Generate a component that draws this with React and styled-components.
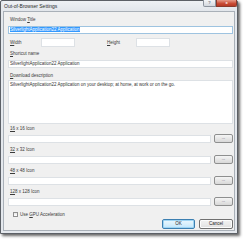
import React from 'react';
import styled, { createGlobalStyle } from 'styled-components';

const Global = createGlobalStyle`
  html, body {
    margin: 0;
    padding: 0;
    background: #ffffff;
  }
  body {
    width: 244px;
    height: 240px;
    overflow: hidden;
    font-family: 'Liberation Sans', Arial, sans-serif;
  }
`;

const Window = styled.div`
  width: 238px;
  height: 234px;
  box-sizing: border-box;
  border: 1px solid #5c6066;
  border-radius: 2px 2px 0 0;
  background: #e4e8ed;
  box-shadow: 2px 2px 3px rgba(0, 0, 0, 0.6);
  display: flex;
  flex-direction: column;
  padding: 0 2px 2px 2px;
`;

const TitleBar = styled.div`
  height: 10px;
  display: flex;
  align-items: flex-start;
  justify-content: space-between;
  background: linear-gradient(#eef1f4, #e2e6eb);
`;

const Title = styled.span`
  font-size: 5px;
  line-height: 6px;
  color: #2a2a2a;
  margin-top: 2px;
  padding-left: 1px;
`;

const Caption = styled.div`
  display: flex;
  margin-top: -1px;
  margin-right: -2px;
`;

const CaptionButton = styled.div`
  width: ${p => p.$w}px;
  height: 7px;
  box-sizing: border-box;
  border: 1px solid ${p => (p.$close ? '#8a3a2c' : '#8c949e')};
  border-top: none;
  background: ${p =>
    p.$close
      ? 'linear-gradient(#e69a88, #c84a34 60%, #b63a26)'
      : 'linear-gradient(#f4f6f8, #d3d8de)'};
  border-radius: ${p => (p.$close ? '0 0 2px 0' : '0 0 0 2px')};
  color: ${p => (p.$close ? '#ffffff' : '#6b7480')};
  font-size: 4px;
  line-height: 6px;
  text-align: center;
  font-weight: bold;
`;

const Client = styled.div`
  flex: 1;
  box-sizing: border-box;
  border: 1px solid #a9b0b8;
  background: #f0f0f0;
  padding: 4px 1px 0 4px;
  display: flex;
  flex-direction: column;
`;

const Label = styled.div`
  height: 7px;
  font-size: 4.5px;
  line-height: 7px;
  color: #3a3a3a;
  padding-left: 2px;
  margin-top: ${p => p.$top || 0}px;
  white-space: nowrap;

  u {
    text-decoration-thickness: 0.5px;
  }
`;

const TextBox = styled.div`
  height: ${p => p.$h || 8}px;
  box-sizing: border-box;
  border: 1px solid ${p => (p.$focus ? '#9ec3e0' : '#dde1e5')};
  background: #ffffff;
  margin-top: ${p => p.$top || 0}px;
  flex: ${p => (p.$grow ? 1 : 'none')};
  width: ${p => (p.$w ? `${p.$w}px` : 'auto')};
  font-size: 4.5px;
  line-height: 6px;
  color: #333;
  padding-left: 1px;
  white-space: nowrap;
  overflow: hidden;
`;

const Selected = styled.span`
  background: #3399ff;
  color: #ffffff;
`;

const TextArea = styled.div`
  height: 44px;
  box-sizing: border-box;
  border: 1px solid #dde1e5;
  background: #ffffff;
  margin-top: 1px;
  padding: 1px 1px 0 1px;
  font-size: 4.5px;
  line-height: 6px;
  color: #333;
  white-space: nowrap;
`;

const SizeRow = styled.div`
  display: flex;
  align-items: center;
  height: 9px;
  margin-top: 4px;
`;

const InlineLabel = styled.div`
  width: ${p => p.$w}px;
  margin-left: ${p => p.$left || 0}px;
  font-size: 4.5px;
  color: #3a3a3a;
  padding-left: 2px;
  box-sizing: border-box;
`;

const IconRow = styled.div`
  display: flex;
  align-items: center;
  gap: 3px;
  height: 9px;
  margin-top: 2px;
`;

const Browse = styled.div`
  width: 19px;
  height: 9px;
  box-sizing: border-box;
  border: 1px solid #8e8f8f;
  border-radius: 2px;
  background: linear-gradient(#f5f5f5, #e6e6e6 50%, #d8d8d8);
  font-size: 4px;
  line-height: 5px;
  text-align: center;
  color: #333;
`;

const CheckRow = styled.div`
  display: flex;
  align-items: center;
  gap: 2px;
  margin-top: 5px;
  padding-left: 5px;
  height: 7px;
`;

const Check = styled.div`
  width: 5px;
  height: 5px;
  box-sizing: border-box;
  border: 1px solid #8f8f8f;
  background: linear-gradient(#e8e8e8, #ffffff);
`;

const CheckText = styled.span`
  font-size: 4.5px;
  color: #3a3a3a;
`;

const Footer = styled.div`
  display: flex;
  justify-content: flex-end;
  gap: 4px;
  margin-top: 1px;
`;

const Button = styled.div`
  width: ${p => p.$w}px;
  height: 10px;
  box-sizing: border-box;
  border: 1px solid ${p => (p.$default ? '#3c7fb1' : '#707070')};
  border-radius: 2px;
  background: ${p =>
    p.$default
      ? 'linear-gradient(#eaf6fd, #d9f0fc 50%, #bee6fd)'
      : 'linear-gradient(#f2f2f2, #ebebeb 50%, #dddddd)'};
  box-shadow: ${p => (p.$default ? 'inset 0 0 0 1px #9fd5f4' : 'inset 0 0 0 1px #fcfcfc')};
  font-size: 4.5px;
  line-height: 8px;
  text-align: center;
  color: #222;
`;

const iconSizes = [
  { key: '16', size: '16 x 16' },
  { key: '32', size: '32 x 32' },
  { key: '48', size: '48 x 48' },
  { key: '128', size: '128 x 128' },
];

export default function App() {
  return (
    <>
      <Global />
      <Window>
        <TitleBar>
          <Title>Out-of-Browser Settings</Title>
          <Caption>
            <CaptionButton $w={13}>?</CaptionButton>
            <CaptionButton $w={21} $close>x</CaptionButton>
          </Caption>
        </TitleBar>
        <Client>
          <Label>Window <u>T</u>itle</Label>
          <TextBox $focus $top={3}>
            <Selected>SilverlightApplication22 Application</Selected>
          </TextBox>
          <SizeRow>
            <InlineLabel $w={33}><u>W</u>idth</InlineLabel>
            <TextBox $w={34} $h={9} />
            <InlineLabel $w={31} $left={30}><u>H</u>eight</InlineLabel>
            <TextBox $w={34} $h={9} />
          </SizeRow>
          <Label $top={3}><u>S</u>hortcut name</Label>
          <TextBox $top={3}>SilverlightApplication22 Application</TextBox>
          <Label $top={4}><u>D</u>ownload description</Label>
          <TextArea>
            SilverlightApplication22 Application on your desktop; at home, at work or on the go.
          </TextArea>
          {iconSizes.map((s, i) => (
            <React.Fragment key={s.key}>
              <Label $top={i === 0 ? 1 : 3}>
                <u>{s.key.slice(0, 2)}</u>{s.size.slice(2)} Icon
              </Label>
              <IconRow>
                <TextBox $grow />
                <Browse>...</Browse>
              </IconRow>
            </React.Fragment>
          ))}
          <CheckRow>
            <Check />
            <CheckText>Use <u>G</u>PU Acceleration</CheckText>
          </CheckRow>
          <Footer>
            <Button $w={33} $default>OK</Button>
            <Button $w={34}>Cancel</Button>
          </Footer>
        </Client>
      </Window>
    </>
  );
}
